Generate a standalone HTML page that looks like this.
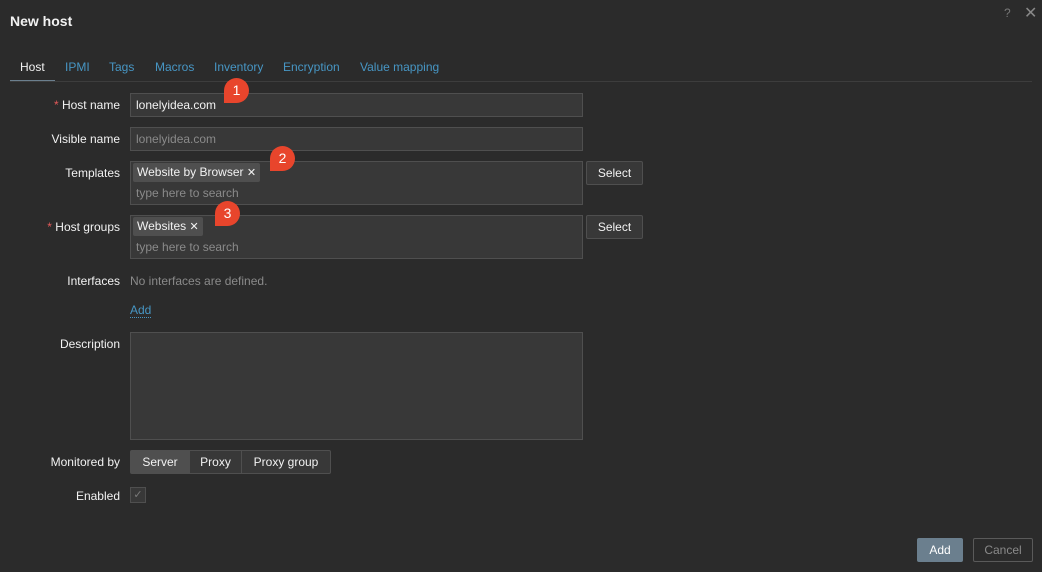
<!DOCTYPE html>
<html><head><meta charset="utf-8"><style>
*{box-sizing:border-box;margin:0;padding:0}
body{width:1042px;height:572px;background:#2b2b2b;font-family:"Liberation Sans",Arial,sans-serif;font-size:12px;color:#f2f2f2;position:relative;overflow:hidden}
.a{position:absolute}
.lbl{position:absolute;right:922px;text-align:right;color:#f2f2f2;white-space:nowrap}
.req:before{content:"* ";color:#e45959}
.inp{position:absolute;left:130px;width:453px;background:#383838;border:1px solid #4f4f4f}
.tab{position:absolute;top:60px;color:#4796c4;font-size:12px}
.btn{position:absolute;background:#383838;border:1px solid #4f4f4f;color:#f2f2f2;text-align:center;border-radius:2px}
.tag{position:absolute;background:#4f4f4f;color:#f2f2f2;padding:0 4px;height:19px;line-height:19px;border-radius:2px;white-space:nowrap}
.tag span{font-size:11px}
.ph{position:absolute;color:#8a8a8a}
.badge{position:absolute;width:25px;height:25px;background:#e8452c;border-radius:50% 50% 50% 0;color:#fff;font-size:14px;text-align:center;line-height:24px}
</style></head><body>
<div class="a" style="left:10px;top:13px;font-size:14px;font-weight:bold;color:#f2f2f2">New host</div>
<div class="a" style="left:1004px;top:6px;color:#777;font-size:12px">?</div>
<div class="a" style="left:1024px;top:3px;color:#888;font-size:16px">✕</div>
<div class="tab" style="left:20px;color:#f2f2f2">Host</div>
<div class="a" style="left:10px;top:80px;width:45px;height:2px;background:#6b7f8e"></div>
<div class="a" style="left:10px;top:81px;width:1022px;height:1px;background:#3d3d3d"></div>
<div class="tab" style="left:65px">IPMI</div>
<div class="tab" style="left:109px">Tags</div>
<div class="tab" style="left:155px">Macros</div>
<div class="tab" style="left:214px">Inventory</div>
<div class="tab" style="left:283px">Encryption</div>
<div class="tab" style="left:360px">Value mapping</div>

<div class="lbl req" style="top:98px">Host name</div>
<div class="inp" style="top:93px;height:24px"></div>
<div class="a" style="left:136px;top:98px">lonelyidea.com</div>

<div class="lbl" style="top:132px">Visible name</div>
<div class="inp" style="top:127px;height:24px"></div>
<div class="ph" style="left:136px;top:132px">lonelyidea.com</div>

<div class="lbl" style="top:166px">Templates</div>
<div class="inp" style="top:161px;height:44px"></div>
<div class="tag" style="left:133px;top:163px">Website by Browser <span>✕</span></div>
<div class="ph" style="left:136px;top:186px">type here to search</div>
<div class="btn" style="left:586px;top:161px;width:57px;height:24px;line-height:22px">Select</div>

<div class="lbl req" style="top:220px">Host groups</div>
<div class="inp" style="top:215px;height:44px"></div>
<div class="tag" style="left:133px;top:217px">Websites <span>✕</span></div>
<div class="ph" style="left:136px;top:240px">type here to search</div>
<div class="btn" style="left:586px;top:215px;width:57px;height:24px;line-height:22px">Select</div>

<div class="lbl" style="top:274px">Interfaces</div>
<div class="ph" style="left:130px;top:274px">No interfaces are defined.</div>
<div class="a" style="left:130px;top:303px;color:#4796c4;border-bottom:1px dotted #4796c4">Add</div>

<div class="lbl" style="top:337px">Description</div>
<div class="inp" style="top:332px;height:108px"></div>

<div class="lbl" style="top:455px">Monitored by</div>
<div class="a" style="left:130px;top:450px;width:201px;height:24px;border:1px solid #4f4f4f;border-radius:2px;background:#383838"></div>
<div class="a" style="left:131px;top:451px;width:58px;height:22px;background:#4f4f4f;text-align:center;line-height:22px">Server</div>
<div class="a" style="left:189px;top:451px;width:53px;height:22px;border-left:1px solid #4f4f4f;border-right:1px solid #4f4f4f;text-align:center;line-height:22px">Proxy</div>
<div class="a" style="left:242px;top:451px;width:88px;height:22px;text-align:center;line-height:22px">Proxy group</div>

<div class="lbl" style="top:489px">Enabled</div>
<div class="a" style="left:130px;top:487px;width:16px;height:16px;border:1px solid #4f4f4f;background:#383838;color:#7a7a7a;font-size:11px;text-align:center;line-height:14px">✓</div>

<div class="a" style="left:917px;top:538px;width:46px;height:24px;background:#6b7f8e;color:#fff;text-align:center;line-height:24px;border-radius:2px">Add</div>
<div class="a" style="left:973px;top:538px;width:60px;height:24px;border:1px solid #5a5a5a;color:#8a8a8a;text-align:center;line-height:22px;border-radius:2px">Cancel</div>

<div class="badge" style="left:224px;top:78px">1</div>
<div class="badge" style="left:270px;top:146px">2</div>
<div class="badge" style="left:215px;top:201px">3</div>
</body></html>
